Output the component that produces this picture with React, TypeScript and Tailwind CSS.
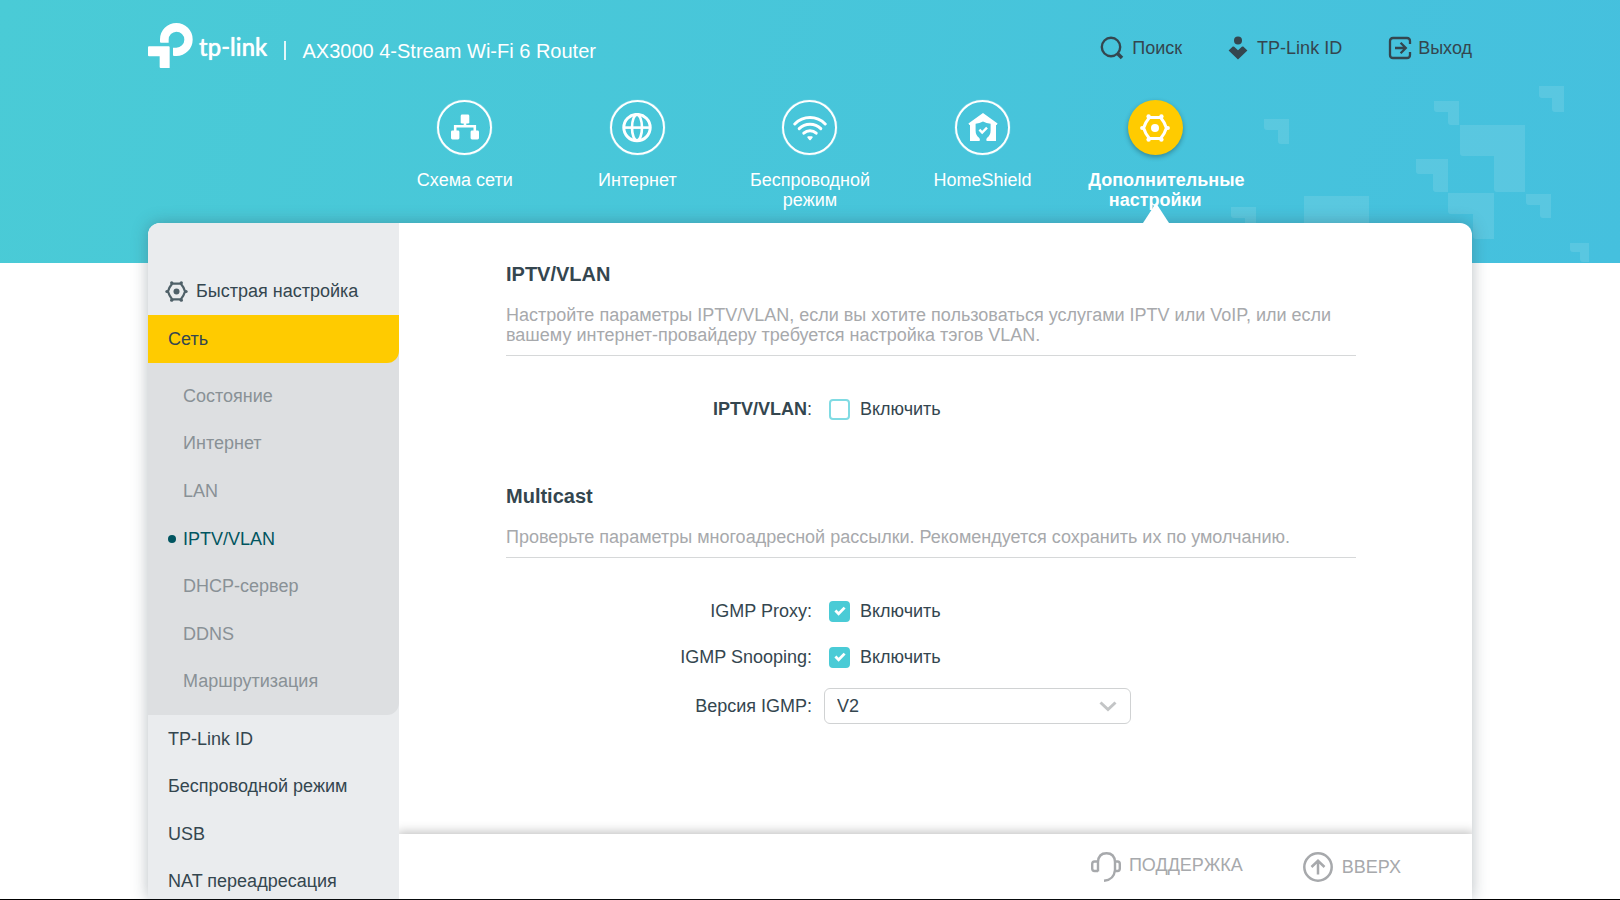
import { useState } from "react";
import type { ReactNode } from "react";

function Logo() {
  return (
    <svg viewBox="24 39 135 135" className="size-[45px] shrink-0" fill="#fff" aria-hidden="true">
      <path d="M63 98Q60 98 60 95V88A49 49 0 0 1 158 88A49 49 0 0 1 109 138H102Q99 138 99 135V113H109A24 24 0 0 0 109 65A24 24 0 0 0 86 89V98Z" />
      <path d="M24 112Q24 109 27 109H86Q89 109 89 112V174H62Q59 174 59 171V139H27Q24 139 24 136Z" />
    </svg>
  );
}

function Pattern() {
  const shapes: [number, number, number, number, number][] = [
    [44, 119, 25, 25, 11],
    [214, 101, 25, 24, 11],
    [319, 86, 25, 26, 12],
    [240, 125, 65, 67, 31],
    [196, 159, 32, 33, 15],
    [228, 193, 46, 46, 21],
    [306, 194, 25, 24, 11],
    [350, 243, 19, 19, 9],
    [11, 207, 25, 25, 11],
    [84, 196, 65, 65, 31],
  ];
  return (
    <svg className="absolute top-0 right-0 h-[263px] w-[400px]" viewBox="0 0 400 263" fill="#fff" fillOpacity="0.11" aria-hidden="true">
      {shapes.map(([x, y, w, h, t]) => (
        <path
          key={`${x}-${y}`}
          d={`M${x} ${y}h${w}v${h}h${3 - t}q-3 0 -3 -3v${t + 3 - h}h${t + 3 - w}q-3 0 -3 -3z`}
        />
      ))}
    </svg>
  );
}

function SearchIcon() {
  return (
    <svg viewBox="0 0 24 24" className="size-6" fill="none" stroke="#34464f" aria-hidden="true">
      <circle cx="11" cy="11" r="9.2" strokeWidth="2.4" />
      <path d="M17.5 17.5L22 22" strokeWidth="3.6" />
    </svg>
  );
}

function CloudIdIcon() {
  return (
    <svg viewBox="0 0 20 24" className="h-6 w-5" fill="#34464f" aria-hidden="true">
      <circle cx="10" cy="4.5" r="4" />
      <path d="M.6 14.6L4.8 10.6Q5.5 10.2 6.2 10.8L10 14.2L13.8 10.8Q14.5 10.2 15.2 10.6L19.4 14.6L10 23.6Z" />
    </svg>
  );
}

function ExitIcon() {
  return (
    <svg viewBox="0 0 24 24" className="size-6" fill="none" stroke="#34464f" strokeWidth="2.3" aria-hidden="true">
      <path d="M22 8V5Q22 2 19 2H5Q2 2 2 5V19Q2 22 5 22H19Q22 22 22 19V16" />
      <path d="M7 12H17M12.6 6.8L17.8 12L12.6 17.2" />
    </svg>
  );
}

function MapIcon() {
  return (
    <svg viewBox="0 0 30 30" className="size-[30px]" fill="#fff" aria-hidden="true">
      <rect x="10.7" y="1.6" width="8.6" height="9" rx="1.4" />
      <rect x="1" y="17.6" width="8.4" height="8.8" rx="1.4" />
      <rect x="20.6" y="17.6" width="8.4" height="8.8" rx="1.4" />
      <path d="M15 10V13.2M5.2 19V13.2H24.8V19" fill="none" stroke="#fff" strokeWidth="2.6" />
    </svg>
  );
}

function GlobeIcon() {
  return (
    <svg viewBox="0 0 30 30" className="size-[30px]" fill="none" stroke="#fff" strokeWidth="2.6" aria-hidden="true">
      <circle cx="15" cy="14.6" r="13.2" strokeWidth="3" />
      <ellipse cx="15" cy="14.6" rx="5" ry="13" />
      <path d="M2 14.6H28" />
    </svg>
  );
}

function WifiIcon() {
  return (
    <svg viewBox="0 0 34 30" className="h-[30px] w-[34px]" fill="none" stroke="#fff" strokeWidth="3" strokeLinecap="round" aria-hidden="true">
      <path d="M1.8 11Q8.2 4.6 17 4.6T32.2 11" />
      <path d="M6.2 15.6Q10.6 11.2 17 11.2T27.8 15.6" />
      <path d="M10.8 20.2Q13.4 17.8 17 17.8T23.2 20.2" />
      <path d="M15.2 24.2H18.8L17 26.4Z" fill="#fff" strokeWidth="1.8" strokeLinejoin="round" />
    </svg>
  );
}

function HomeShieldIcon() {
  return (
    <svg viewBox="0 0 30 30" className="size-[30px]" aria-hidden="true">
      <path
        fill="#fff"
        fillRule="evenodd"
        d="M15 0L29.6 10.6L28.6 12H28V28H18.6Q17.6 25.8 19.4 24.6Q22.6 22.2 22.6 17.6V10.8Q18.4 10.4 15 8.6Q11.6 10.4 7.6 10.8V17.6Q7.6 22.2 10.8 24.6Q12.6 25.8 11.6 28H2V12H1.4L.4 10.6Z"
      />
      <path d="M11.4 16.6L14.2 19.6L19 14.6" fill="none" stroke="#fff" strokeWidth="2.4" />
    </svg>
  );
}

function GearIcon({ color, className }: { color: string; className: string }) {
  return (
    <svg viewBox="0 0 30 28" className={className} aria-hidden="true">
      <path
        d="M9.4 3.4H20.6Q24.6 8 26.4 14Q24.6 20 20.6 24.6H9.4Q5.4 20 3.6 14Q5.4 8 9.4 3.4Z"
        fill="none"
        stroke={color}
        strokeLinejoin="round"
        strokeWidth="3"
      />
      <g fill={color}>
        <circle cx="15" cy="14" r="4" />
        <circle cx="8.6" cy="2.4" r="2.2" />
        <circle cx="21.4" cy="2.4" r="2.2" />
        <circle cx="8.6" cy="25.6" r="2.2" />
        <circle cx="21.4" cy="25.6" r="2.2" />
        <circle cx="2.2" cy="14" r="2.1" />
        <circle cx="27.8" cy="14" r="2.1" />
      </g>
    </svg>
  );
}

function SupportIcon() {
  return (
    <svg viewBox="0 0 30 30" className="size-[30px]" fill="none" stroke="#a7a9ac" strokeWidth="2.4" aria-hidden="true">
      <path d="M7 19.4V10Q7.4 1.2 15.5 1.2T24 10V18Q23 28 13 28.8" />
      <path d="M7 9.5H3.5Q1.2 9.5 1.2 12V16.5Q1.2 19 3.5 19H7M24 9.5H26.5Q28.8 9.5 28.8 12V16.5Q28.8 19 26.5 19H24" />
    </svg>
  );
}

function UpIcon() {
  return (
    <svg viewBox="0 0 30 30" className="size-[30px]" fill="none" stroke="#a7a9ac" strokeWidth="2.5" aria-hidden="true">
      <circle cx="15" cy="15" r="13.7" />
      <path d="M15 22.5V9.4M8.5 15L15 8.8L21.5 15" />
    </svg>
  );
}

function NavItem({ label, icon, active = false }: { label: string; icon: ReactNode; active?: boolean }) {
  return (
    <a href="#" className={`flex flex-col items-center text-center ${active ? "font-bold" : ""}`}>
      <span
        className={
          active
            ? "flex size-[55px] items-center justify-center rounded-full bg-[#ffcb00] shadow-[0_2px_5px_rgba(0,0,0,0.3)]"
            : "flex size-[55px] items-center justify-center rounded-full border-2 border-white shadow-[0_0_1px_#fff]"
        }
      >
        {icon}
      </span>
      <span className="mt-[15px] w-[134px]">{label}</span>
    </a>
  );
}

function EnableBox({ id, initial, label }: { id: string; initial: boolean; label: string }) {
  const [on, setOn] = useState(initial);
  return (
    <span className="ml-[17px] flex items-center gap-[10px]">
      <span className="grid size-[21px] place-items-center">
        <input
          id={id}
          type="checkbox"
          aria-label={label}
          checked={on}
          onChange={(e) => setOn(e.target.checked)}
          className="col-start-1 row-start-1 size-[21px] appearance-none rounded-[4px] border-2 border-[#80dbe3] bg-white checked:border-[#4acbd6] checked:bg-[#4acbd6]"
        />
        {on && (
          <svg viewBox="0 0 12 10" className="pointer-events-none col-start-1 row-start-1 h-[10px] w-3" fill="none" stroke="#fff" strokeWidth="2.8" aria-hidden="true">
            <path d="M1.4 4.6L4.6 7.8L10.6 1.6" />
          </svg>
        )}
      </span>
      <label htmlFor={id}>Включить</label>
    </span>
  );
}

const subItems = ["Состояние", "Интернет", "LAN", "IPTV/VLAN", "DHCP-сервер", "DDNS", "Маршрутизация"];
const mainItems = ["TP-Link ID", "Беспроводной режим", "USB", "NAT переадресация"];

export default function App() {
  return (
    <div className="flex min-h-screen flex-col border-b border-black bg-white font-['Liberation_Sans',Arial,sans-serif] text-[18px] leading-5 text-[#34464f]">
      <header className="relative h-[263px] bg-linear-[107deg,#4acbd6,#45c0de] text-white">
        <Pattern />
        <div className="relative mx-auto max-w-[1324px]">
          <div className="flex h-[100px] items-start justify-between">
            <div className="flex pt-[23px]">
              <Logo />
              <span className="ml-[6px] pt-3 font-[Lato] text-[24px] leading-6 font-medium [text-shadow:0_0_1px_#fff]">tp-link</span>
              <span className="mt-[18px] ml-[17px] h-[19px] w-[2px] bg-white/85" />
              <h1 className="ml-4 pt-[18px] text-[20px]">AX3000 4-Stream Wi-Fi 6 Router</h1>
            </div>
            <nav className="flex gap-[46px] pt-9 text-[#34464f]">
              <a href="#" className="flex items-center gap-2"><SearchIcon />Поиск</a>
              <a href="#" className="flex items-center gap-[9px]"><CloudIdIcon />TP-Link ID</a>
              <a href="#" className="flex items-center gap-[6px]"><ExitIcon />Выход</a>
            </nav>
          </div>
          <nav className="mx-auto grid max-w-[863px] grid-cols-5">
            <NavItem label="Схема сети" icon={<MapIcon />} />
            <NavItem label="Интернет" icon={<GlobeIcon />} />
            <NavItem label="Беспроводной режим" icon={<WifiIcon />} />
            <NavItem label="HomeShield" icon={<HomeShieldIcon />} />
            <NavItem label="Дополнительные настройки" icon={<GearIcon color="#fff" className="h-7 w-[30px]" />} active />
          </nav>
        </div>
      </header>

      <div className="relative mx-auto -mt-10 flex w-full max-w-[1324px] grow rounded-t-[12px] bg-white shadow-[0_0_16px_rgba(52,70,79,0.35)]">
        <svg viewBox="0 0 26 20" className="absolute -top-5 right-[303px] h-5 w-[26px]" fill="#fff" aria-hidden="true">
          <path d="M13 0L26 20H0Z" />
        </svg>
        <aside className="w-[251px] shrink-0 rounded-tl-[12px] bg-[#eaecee] pt-[45px]">
          <a href="#" className="mb-[1px] flex h-[46px] items-center gap-2 pl-[17px]">
            <GearIcon color="#4f6068" className="h-[21px] w-[23px]" />
            Быстрая настройка
          </a>
          <div className="rounded-br-[12px] bg-[#dddfe1]">
            <a href="#" className="flex h-12 items-center rounded-br-[12px] bg-[#ffcb00] pl-5">Сеть</a>
            <ul className="flex h-[352px] flex-col pt-[9px] pb-[10px] text-[#899196]">
              {subItems.map((item) => (
                <li key={item} className="flex flex-1 items-center">
                  <span className="flex w-[35px] justify-center pl-3">
                    {item === "IPTV/VLAN" && <span className="size-2 rounded-full bg-[#015560]" />}
                  </span>
                  <a href="#" className={item === "IPTV/VLAN" ? "text-[#015560]" : ""}>{item}</a>
                </li>
              ))}
            </ul>
          </div>
          <ul className="-mb-[6px] flex h-[190px] flex-col pl-5">
            {mainItems.map((item) => (
              <li key={item} className="flex flex-1 items-center">
                <a href="#">{item}</a>
              </li>
            ))}
          </ul>
        </aside>

        <div className="flex min-w-0 grow flex-col">
          <main className="grow pt-10 pr-[116px] pl-[107px]">
            <section>
              <h2 className="text-[20px] leading-[22px] font-bold">IPTV/VLAN</h2>
              <p className="mt-[20px] border-b border-[#d6d8d9] pb-[10px] text-[#a7a9ac]">
                Настройте параметры IPTV/VLAN, если вы хотите пользоваться услугами IPTV или VoIP, или если вашему
                интернет-провайдеру требуется настройка тэгов VLAN.
              </p>
              <div className="mt-[43px] flex h-5 items-center">
                <label htmlFor="iptv" className="w-[306px] text-right"><b>IPTV/VLAN</b>:</label>
                <EnableBox id="iptv" initial={false} label="IPTV/VLAN" />
              </div>
            </section>
            <section className="mt-[66px]">
              <h2 className="text-[20px] leading-[22px] font-bold">Multicast</h2>
              <p className="mt-[20px] border-b border-[#d6d8d9] pb-[10px] text-[#a7a9ac]">
                Проверьте параметры многоадресной рассылки. Рекомендуется сохранить их по умолчанию.
              </p>
              <div className="mt-[43px] flex h-5 items-center">
                <label htmlFor="proxy" className="w-[306px] text-right">IGMP Proxy:</label>
                <EnableBox id="proxy" initial label="IGMP Proxy" />
              </div>
              <div className="mt-[26px] flex h-5 items-center">
                <label htmlFor="snooping" className="w-[306px] text-right">IGMP Snooping:</label>
                <EnableBox id="snooping" initial label="IGMP Snooping" />
              </div>
              <div className="mt-[21px] flex items-center">
                <label htmlFor="version" className="w-[306px] text-right">Версия IGMP:</label>
                <div className="relative ml-3 w-[307px]">
                  <select id="version" defaultValue="V2" className="h-9 w-full appearance-none rounded-[6px] border border-[#d0d2d3] bg-white px-3 leading-5">
                    <option>V1</option>
                    <option>V2</option>
                    <option>V3</option>
                  </select>
                  <svg viewBox="0 0 18 11" className="pointer-events-none absolute top-[13px] right-[14px] h-[11px] w-[18px]" fill="none" stroke="#c3c5c6" strokeWidth="3" aria-hidden="true">
                    <path d="M1.5 1.5L9 8.5L16.5 1.5" />
                  </svg>
                </div>
              </div>
            </section>
          </main>
          <footer className="flex h-[65px] justify-end gap-[60px] bg-white pt-[18px] pr-[71px] text-[#a7a9ac] shadow-[0_0_10px_2px_rgba(0,0,0,0.25)] [clip-path:inset(-14px_0_0_0)]">
            <a href="#" className="flex h-[30px] items-start gap-2"><SupportIcon /><span className="pt-[3px]">ПОДДЕРЖКА</span></a>
            <button type="button" className="flex h-[30px] items-center gap-[9px]"><UpIcon />ВВЕРХ</button>
          </footer>
        </div>
      </div>
    </div>
  );
}
